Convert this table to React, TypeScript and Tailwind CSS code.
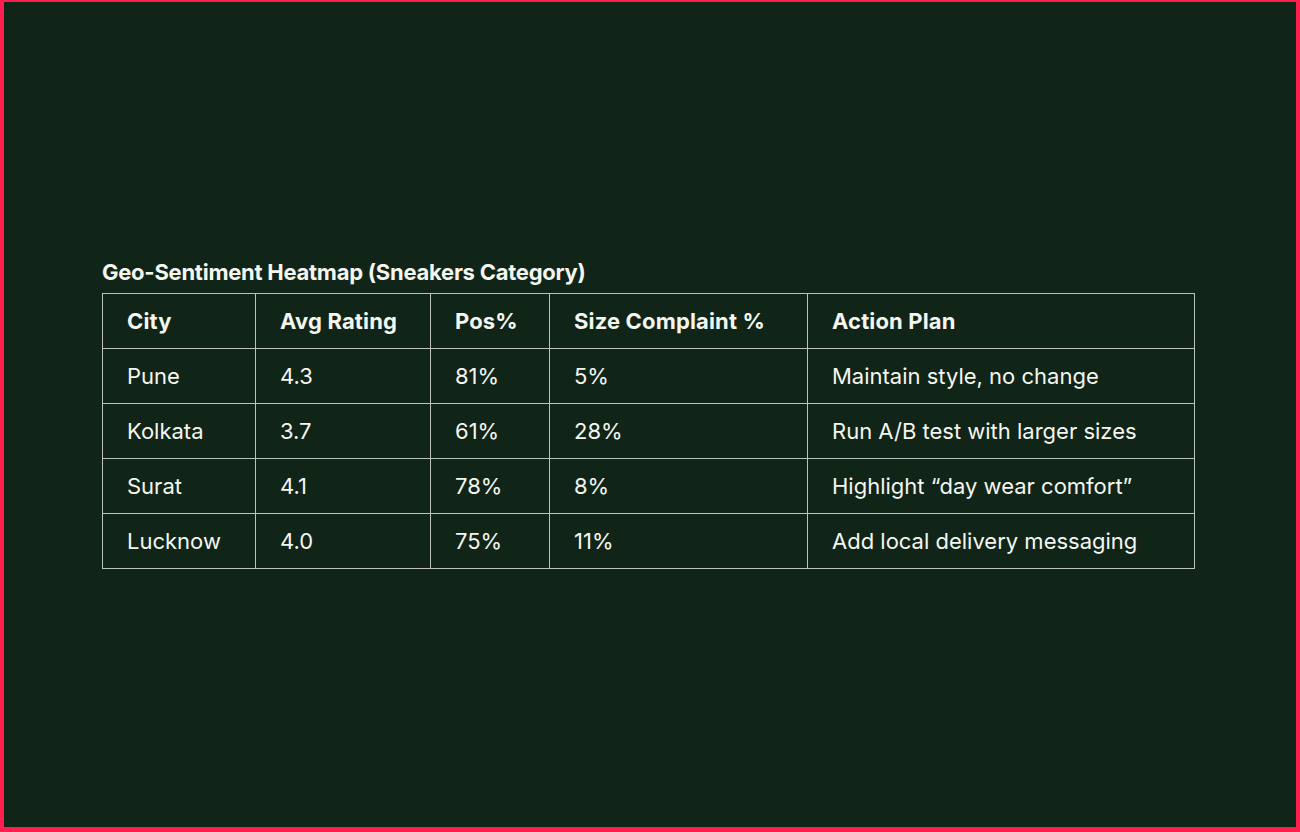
import React from 'react';

const rows = [
  ['Pune', '4.3', '81%', '5%', 'Maintain style, no change'],
  ['Kolkata', '3.7', '61%', '28%', 'Run A/B test with larger sizes'],
  ['Surat', '4.1', '78%', '8%', 'Highlight \u201cday wear comfort\u201d'],
  ['Lucknow', '4.0', '75%', '11%', 'Add local delivery messaging'],
];

const headers = ['City', 'Avg Rating', 'Pos%', 'Size Complaint %', 'Action Plan'];
const widths = ['w-[153px]', 'w-[175px]', 'w-[119px]', 'w-[258px]', 'w-[387px]'];

export default function App() {
  return (
    <div className="w-[1300px] h-[832px] bg-[#ff1f4f] pt-[2px] pl-[4px] pr-[4px] pb-[5px]">
      <div className="h-full bg-[#112418] text-[#f4f6f0] font-['Inter',sans-serif] pl-[98px] pt-[255px]">
        <h2 className="text-[22px] font-bold leading-[30px] tracking-[-0.25px] mb-[6px]">
          Geo-Sentiment Heatmap (Sneakers Category)
        </h2>
        <table className="border-collapse text-[22px]">
          <thead>
            <tr className="h-[55px]">
              {headers.map((h, i) => (
                <th key={h} className={`${widths[i]} border border-[#bcc4bc] text-left font-bold tracking-[0.15px] pl-[24px]`}>
                  {h}
                </th>
              ))}
            </tr>
          </thead>
          <tbody>
            {rows.map((r) => (
              <tr key={r[0]} className="h-[55px]">
                {r.map((c, i) => (
                  <td key={i} className={`${widths[i]} border border-[#bcc4bc] pl-[24px]`}>
                    {c}
                  </td>
                ))}
              </tr>
            ))}
          </tbody>
        </table>
      </div>
    </div>
  );
}
